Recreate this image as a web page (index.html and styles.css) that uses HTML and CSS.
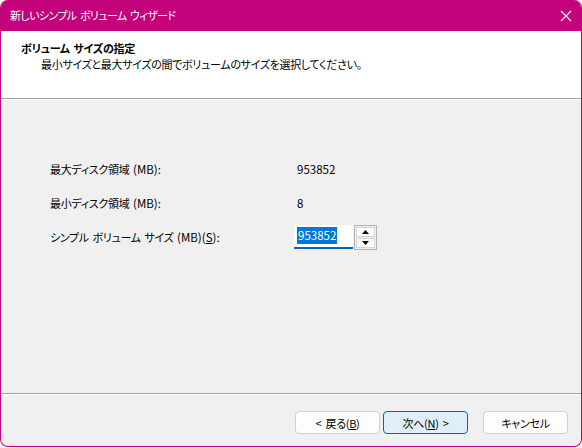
FILE: index.html
```html
<!DOCTYPE html>
<html lang="ja">
<head>
<meta charset="utf-8">
<link rel="stylesheet" href="styles.css">
</head>
<body>
<div class="window">
  <div class="titlebar">
    <span class="title">新しいシンプル ボリューム ウィザード</span>
    <svg class="close" width="12" height="12" viewBox="0 0 12 12"><path d="M1 1L11 11M11 1L1 11" stroke="#fff" stroke-width="1.1" fill="none"/></svg>
  </div>
  <div class="header">
    <div class="h-title">ボリューム サイズの指定</div>
    <div class="h-sub">最小サイズと最大サイズの間でボリュームのサイズを選択してください。</div>
  </div>
  <div class="content">
    <div class="row"><span class="label">最大ディスク領域 <span class="lat">(MB):</span></span><span class="value">953852</span></div>
    <div class="row"><span class="label">最小ディスク領域 <span class="lat">(MB):</span></span><span class="value">8</span></div>
    <div class="row"><span class="label">シンプル ボリューム サイズ <span class="lat">(MB)(<u>S</u>):</span></span>
      <div class="spinbox">
        <div class="input"><span class="sel">953852</span></div>
        <div class="spin">
          <div class="sbtn"><svg width="7" height="4" viewBox="0 0 7 4"><path d="M0 4L3.5 0L7 4Z" fill="#000"/></svg></div>
          <div class="sbtn"><svg width="7" height="4" viewBox="0 0 7 4"><path d="M0 0L7 0L3.5 4Z" fill="#000"/></svg></div>
        </div>
      </div>
    </div>
  </div>
  <div class="footer">
    <button class="btn">&lt; 戻る(<u>B</u>)</button>
    <button class="btn default">次へ(<u>N</u>) &gt;</button>
    <button class="btn cancel">キャンセル</button>
  </div>
</div>
</body>
</html>
```
FILE: styles.css
```css
html, body {
  margin: 0;
  padding: 0;
  background: #ffffff;
}
body {
  font-family: "Noto Sans CJK JP", "Noto Sans", sans-serif;
  font-size: 11px;
  letter-spacing: -0.3px;
  word-spacing: 1.5px;
  font-feature-settings: "palt";
  color: #000;
}
.window {
  width: 582px;
  height: 447px;
  box-sizing: border-box;
  border: 1px solid #c2037c;
  border-top: none;
  border-radius: 8px;
  overflow: hidden;
  background: #f0f0f0;
  display: flex;
  flex-direction: column;
}
.titlebar {
  height: 31px;
  background: #c2037c;
  display: flex;
  align-items: center;
  padding-left: 9px;
  padding-right: 9px;
  flex-shrink: 0;
}
.title {
  color: #fff;
  flex: 1;
  line-height: 31px;
  letter-spacing: -0.6px;
}
.close {
  display: block;
}
.header {
  background: #fff;
  height: 68px;
  border-bottom: 1px solid #a0a0a0;
  box-shadow: 0 1px 0 #ffffff;
  padding-left: 20px;
  padding-top: 9px;
  box-sizing: border-box;
  flex-shrink: 0;
}
.h-title {
  font-weight: bold;
  line-height: 16px;
}
.h-sub {
  padding-left: 20px;
  line-height: 16px;
}
.lat {
  font-size: 11.5px;
  letter-spacing: 0;
}
.content {
  flex: 1;
  padding-top: 62px;
  padding-left: 49px;
  display: flex;
  flex-direction: column;
  gap: 18px;
}
.row {
  display: flex;
  align-items: center;
  height: 16px;
}
.label {
  width: 247px;
}
.value {
  font-size: 11.5px;
  letter-spacing: 0;
}
.spinbox {
  display: flex;
  align-items: flex-start;
  margin-left: -3px;
}
.input {
  width: 59px;
  height: 24px;
  box-sizing: border-box;
  background: #fff;
  border-bottom: 2px solid #0067c0;
  padding: 2px 0 0 3px;
}
.sel {
  background: #0078d7;
  color: #fff;
  display: inline-block;
  line-height: 17px;
  padding: 0 1px;
  font-size: 11.5px;
  letter-spacing: 0;
}
.spin {
  margin-left: 1px;
  width: 23px;
  height: 25px;
  box-sizing: border-box;
  border: 1px solid #b4b4b4;
  background: #f0f0f0;
  display: flex;
  flex-direction: column;
  gap: 1px;
  padding: 1px;
}
.sbtn {
  flex: 1;
  background: #fdfdfd;
  border: 1px solid #d4d4d4;
  display: flex;
  align-items: center;
  justify-content: center;
}
.sbtn svg {
  display: block;
}
.footer {
  height: 53px;
  flex-shrink: 0;
  border-top: 1px solid #a0a0a0;
  box-shadow: inset 0 1px 0 #ffffff;
  box-sizing: border-box;
  display: flex;
  align-items: flex-start;
  justify-content: flex-end;
  padding-top: 17px;
  padding-right: 13px;
  gap: 3px;
}
.btn {
  width: 85px;
  height: 23px;
  box-sizing: border-box;
  font-family: inherit;
  font-size: 11px;
  letter-spacing: -0.3px;
  word-spacing: 2px;
  font-feature-settings: "palt";
  background: #fdfdfd;
  border: 1px solid #d0d0d0;
  border-radius: 4px;
  padding: 0;
  color: #000;
}
.btn.default {
  background: #e0eef9;
  border-color: #0067c0;
}
.btn.cancel {
  margin-left: 12px;
}
```
